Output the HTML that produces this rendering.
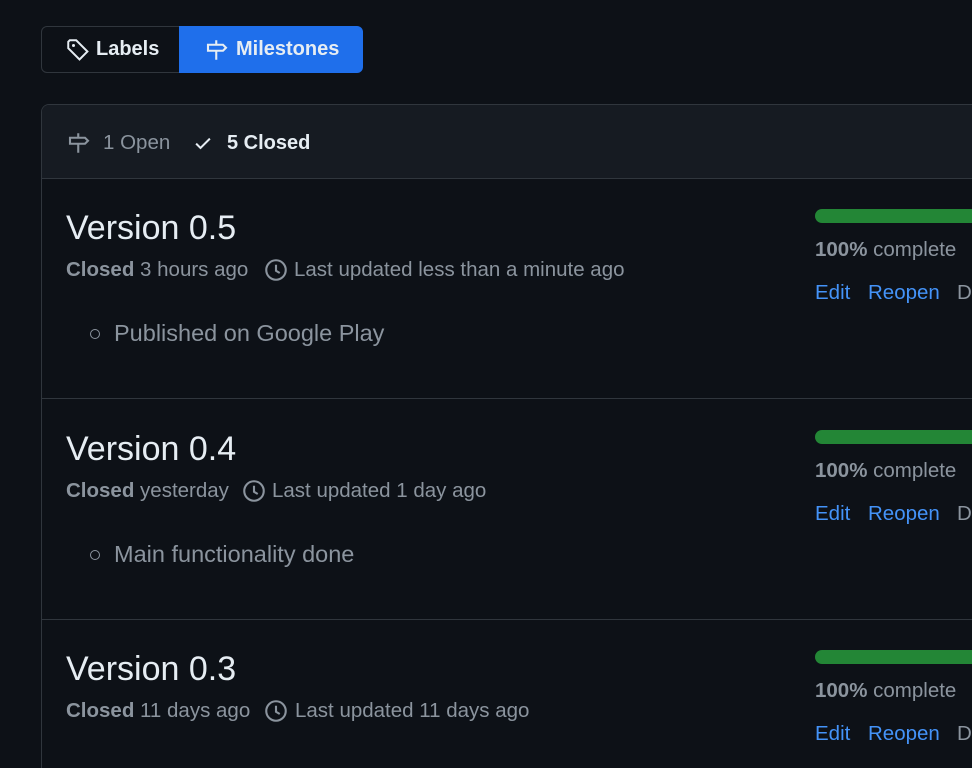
<!DOCTYPE html><html style="overflow:hidden;height:768px"><head><style>
body{margin:0;background:#0d1117;width:972px;height:768px;overflow:hidden;font-family:"Liberation Sans",sans-serif;color:#c9d1d9;position:relative}
.a{position:absolute;white-space:nowrap;line-height:1}
.seg{position:absolute;top:26px;height:47px;border:1px solid #30363d;box-sizing:border-box;font-size:20px;font-weight:bold;display:flex;align-items:center}
.box{position:absolute;left:41px;top:104px;width:931px;height:664px;border:1px solid #30363d;border-bottom:none;border-right:none;border-radius:8px 0 0 0;box-sizing:border-box;overflow:hidden}
.hdr{position:absolute;left:0;top:0;right:0;height:73px;background:#161b22;border-bottom:1px solid #30363d}
.row{position:absolute;left:0;right:0;height:220px;border-bottom:1px solid #30363d}
.t{font-size:34px;color:#e6edf3;left:24px;top:33px}
.m{font-size:20.5px;color:#8b949e;left:24px;top:82px}
.m b{color:#8b949e}
.d{font-size:23.5px;color:#8b949e;left:72px;top:144px}
.bul{position:absolute;left:48px;top:151px;width:8px;height:8px;border:1.5px solid #8b949e;border-radius:50%}
.bar{position:absolute;left:773px;top:31px;width:300px;height:14px;background:#238636;border-radius:7px}
.pc{font-size:20.5px;color:#8b949e;left:773px;top:62px}
.lk{font-size:20.5px;color:#4493f8;top:105px}
</style></head><body>
<div class="seg" style="left:41px;width:139px;border-radius:6px 0 0 6px;color:#e6edf3;padding-left:24px">
<svg width="24" height="24" viewBox="0 0 16 16" style="margin-right:6px" fill="none" stroke="#e6edf3" stroke-width="1.3"><path d="M1.5 2.5v4.3l7.5 7.5 5.3-5.3-7.5-7.5H2.5z"/><circle cx="5" cy="5" r="1" fill="#e6edf3" stroke="none"/></svg>Labels</div>
<div class="seg" style="left:179px;width:184px;border-radius:0 6px 6px 0;background:#1f6feb;border-color:#1f6feb;color:#e6edf3;padding-left:24px">
<svg width="26" height="24" viewBox="0 0 16 16" style="margin-right:6px" fill="none" stroke="#e6edf3" stroke-width="1.4"><path d="M2 4.5h10l2 2-2 2H2z M7.5 1.5v3 M7.5 8.5v6"/></svg>Milestones</div>
<div class="box">
<div class="hdr">
<svg class="a" style="left:24px;top:26px" width="26" height="24" viewBox="0 0 16 16" fill="none" stroke="#8b949e" stroke-width="1.4"><path d="M2 4.5h10l2 2-2 2H2z M7.5 1.5v3 M7.5 8.5v6"/></svg>
<div class="a" style="left:61px;top:28px;font-size:20.5px;color:#8b949e">1 Open</div>
<svg class="a" style="left:151px;top:28px" width="20" height="20" viewBox="0 0 16 16" fill="none" stroke="#e6edf3" stroke-width="1.6"><path d="M2.5 8.5l3.5 3.5 7.5-7.5"/></svg>
<div class="a" style="left:185px;top:28px;font-size:20px;color:#e6edf3;font-weight:bold">5 Closed</div>
</div>
<div class="row" style="top:73px">
<div class="a t">Version 0.5</div>
<div class="a m"><b>Closed</b> 3 hours ago</div>
<svg class="a" style="left:222px;top:80px" width="24" height="24" viewBox="0 0 16 16" fill="none" stroke="#8b949e" stroke-width="1.4"><circle cx="8" cy="8" r="6.5"/><path d="M8 4.5V8.5l2.5 1.5"/></svg>
<div class="a m" style="left:252px">Last updated less than a minute ago</div>
<div class="bul"></div><div class="a d">Published on Google Play</div>
<div class="bar"></div><div class="a pc"><b>100%</b> complete</div>
<div class="a lk" style="left:773px">Edit</div><div class="a lk" style="left:826px">Reopen</div><div class="a lk" style="left:915px;color:#8b949e">Delete</div>
</div>
<div class="row" style="top:294px">
<div class="a t">Version 0.4</div>
<div class="a m"><b>Closed</b> yesterday</div>
<svg class="a" style="left:200px;top:80px" width="24" height="24" viewBox="0 0 16 16" fill="none" stroke="#8b949e" stroke-width="1.4"><circle cx="8" cy="8" r="6.5"/><path d="M8 4.5V8.5l2.5 1.5"/></svg>
<div class="a m" style="left:230px">Last updated 1 day ago</div>
<div class="bul"></div><div class="a d">Main functionality done</div>
<div class="bar"></div><div class="a pc"><b>100%</b> complete</div>
<div class="a lk" style="left:773px">Edit</div><div class="a lk" style="left:826px">Reopen</div><div class="a lk" style="left:915px;color:#8b949e">Delete</div>
</div>
<div class="row" style="top:514px;border-bottom:none;height:150px">
<div class="a t">Version 0.3</div>
<div class="a m"><b>Closed</b> 11 days ago</div>
<svg class="a" style="left:222px;top:80px" width="24" height="24" viewBox="0 0 16 16" fill="none" stroke="#8b949e" stroke-width="1.4"><circle cx="8" cy="8" r="6.5"/><path d="M8 4.5V8.5l2.5 1.5"/></svg>
<div class="a m" style="left:253px">Last updated 11 days ago</div>
<div class="bar"></div><div class="a pc"><b>100%</b> complete</div>
<div class="a lk" style="left:773px">Edit</div><div class="a lk" style="left:826px">Reopen</div><div class="a lk" style="left:915px;color:#8b949e">Delete</div>
</div>
</div>
</body></html>
